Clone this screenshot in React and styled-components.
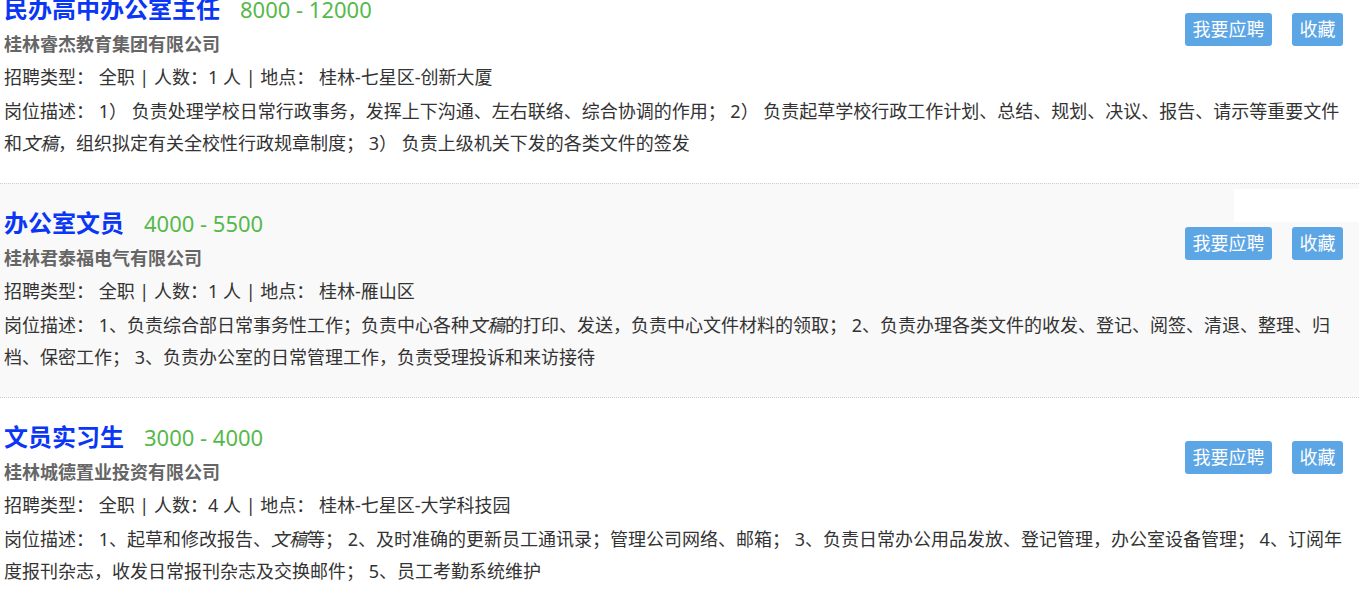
import React from 'react'
import styled, { createGlobalStyle } from 'styled-components'

const GlobalStyle = createGlobalStyle`
    html, body {
        margin: 0;
        padding: 0;
        background: #fff;
        overflow: hidden;
    }
    body {
        font-family: "Microsoft YaHei", "Noto Sans", "Noto Sans CJK SC", sans-serif;
        color: #333;
    }
`

const JobList = styled.ul`
    list-style: none;
    margin: -31px 0 0 0;
    padding: 0;
`

const JobItem = styled.li`
    position: relative;
    border-top: 1px dotted #ccc;
    padding: 21px 16px 24px 4px;
    background: ${props => (props.active ? '#f9f9f9' : '#fff')};
`

// white patch that sits over the hovered row's top right corner
const Blank = styled.div`
    position: absolute;
    top: 5px;
    right: 0;
    width: 125px;
    height: 33px;
    background: #fff;
`

const Top = styled.div`
    display: flex;
    justify-content: space-between;
    align-items: flex-start;
`

const TitleLine = styled.h3`
    margin: 0 0 1px 0;
    height: 36px;
    line-height: 36px;
    display: flex;
    align-items: baseline;
    white-space: nowrap;
`

const JobTitle = styled.a`
    font-size: 24px;
    font-weight: 700;
    color: #0a36f5;
    text-decoration: none;
`

const Salary = styled.span`
    margin-left: 20px;
    font-size: 22px;
    font-weight: 400;
    color: #55b949;
`

const Company = styled.p`
    margin: 0;
    height: 33px;
    line-height: 33px;
    font-size: 18px;
    font-weight: 700;
    color: #666;
`

const Buttons = styled.div`
    display: flex;
    gap: 20px;
    padding-top: 22px;
`

const Btn = styled.button`
    height: 33px;
    padding: 0 7.5px;
    border: none;
    border-radius: 3px;
    background: #5da6e5;
    color: #fff;
    font-family: inherit;
    font-size: 18px;
    line-height: 33px;
    cursor: pointer;
`

const Info = styled.p`
    margin: 0;
    height: 33px;
    line-height: 33px;
    font-size: 18px;
    color: #333;
`

const Desc = styled.p`
    margin: 1px 0 0 0;
    line-height: 32px;
    font-size: 18px;
    color: #333;
`

const jobs = [
    {
        title: '民办高中办公室主任',
        salary: '8000 - 12000',
        company: '桂林睿杰教育集团有限公司',
        people: 1,
        place: '桂林-七星区-创新大厦',
        desc: (
            <>
                岗位描述： 1） 负责处理学校日常行政事务，发挥上下沟通、左右联络、综合协调的作用； 2） 负责起草学校行政工作计划、总结、规划、决议、报告、请示等重要文件和<em>文稿</em>，组织拟定有关全校性行政规章制度； 3） 负责上级机关下发的各类文件的签发
            </>
        ),
    },
    {
        title: '办公室文员',
        salary: '4000 - 5500',
        company: '桂林君泰福电气有限公司',
        people: 1,
        place: '桂林-雁山区',
        active: true,
        desc: (
            <>
                岗位描述： 1、负责综合部日常事务性工作；负责中心各种<em>文稿</em>的打印、发送，负责中心文件材料的领取； 2、负责办理各类文件的收发、登记、阅签、清退、整理、归档、保密工作； 3、负责办公室的日常管理工作，负责受理投诉和来访接待
            </>
        ),
    },
    {
        title: '文员实习生',
        salary: '3000 - 4000',
        company: '桂林城德置业投资有限公司',
        people: 4,
        place: '桂林-七星区-大学科技园',
        desc: (
            <>
                岗位描述： 1、起草和修改报告、<em>文稿</em>等； 2、及时准确的更新员工通讯录；管理公司网络、邮箱； 3、负责日常办公用品发放、登记管理，办公室设备管理； 4、订阅年度报刊杂志，收发日常报刊杂志及交换邮件； 5、员工考勤系统维护
            </>
        ),
    },
]

export default function App() {
    return (
        <>
            <GlobalStyle />
            <JobList>
                {jobs.map(job => (
                    <JobItem key={job.title} active={job.active}>
                        {job.active && <Blank />}
                        <Top>
                            <div>
                                <TitleLine>
                                    <JobTitle href="#">{job.title}</JobTitle>
                                    <Salary>{job.salary}</Salary>
                                </TitleLine>
                                <Company>{job.company}</Company>
                            </div>
                            <Buttons>
                                <Btn>我要应聘</Btn>
                                <Btn>收藏</Btn>
                            </Buttons>
                        </Top>
                        <Info>招聘类型： 全职 | 人数：{job.people} 人 | 地点： {job.place}</Info>
                        <Desc>{job.desc}</Desc>
                    </JobItem>
                ))}
            </JobList>
        </>
    )
}
